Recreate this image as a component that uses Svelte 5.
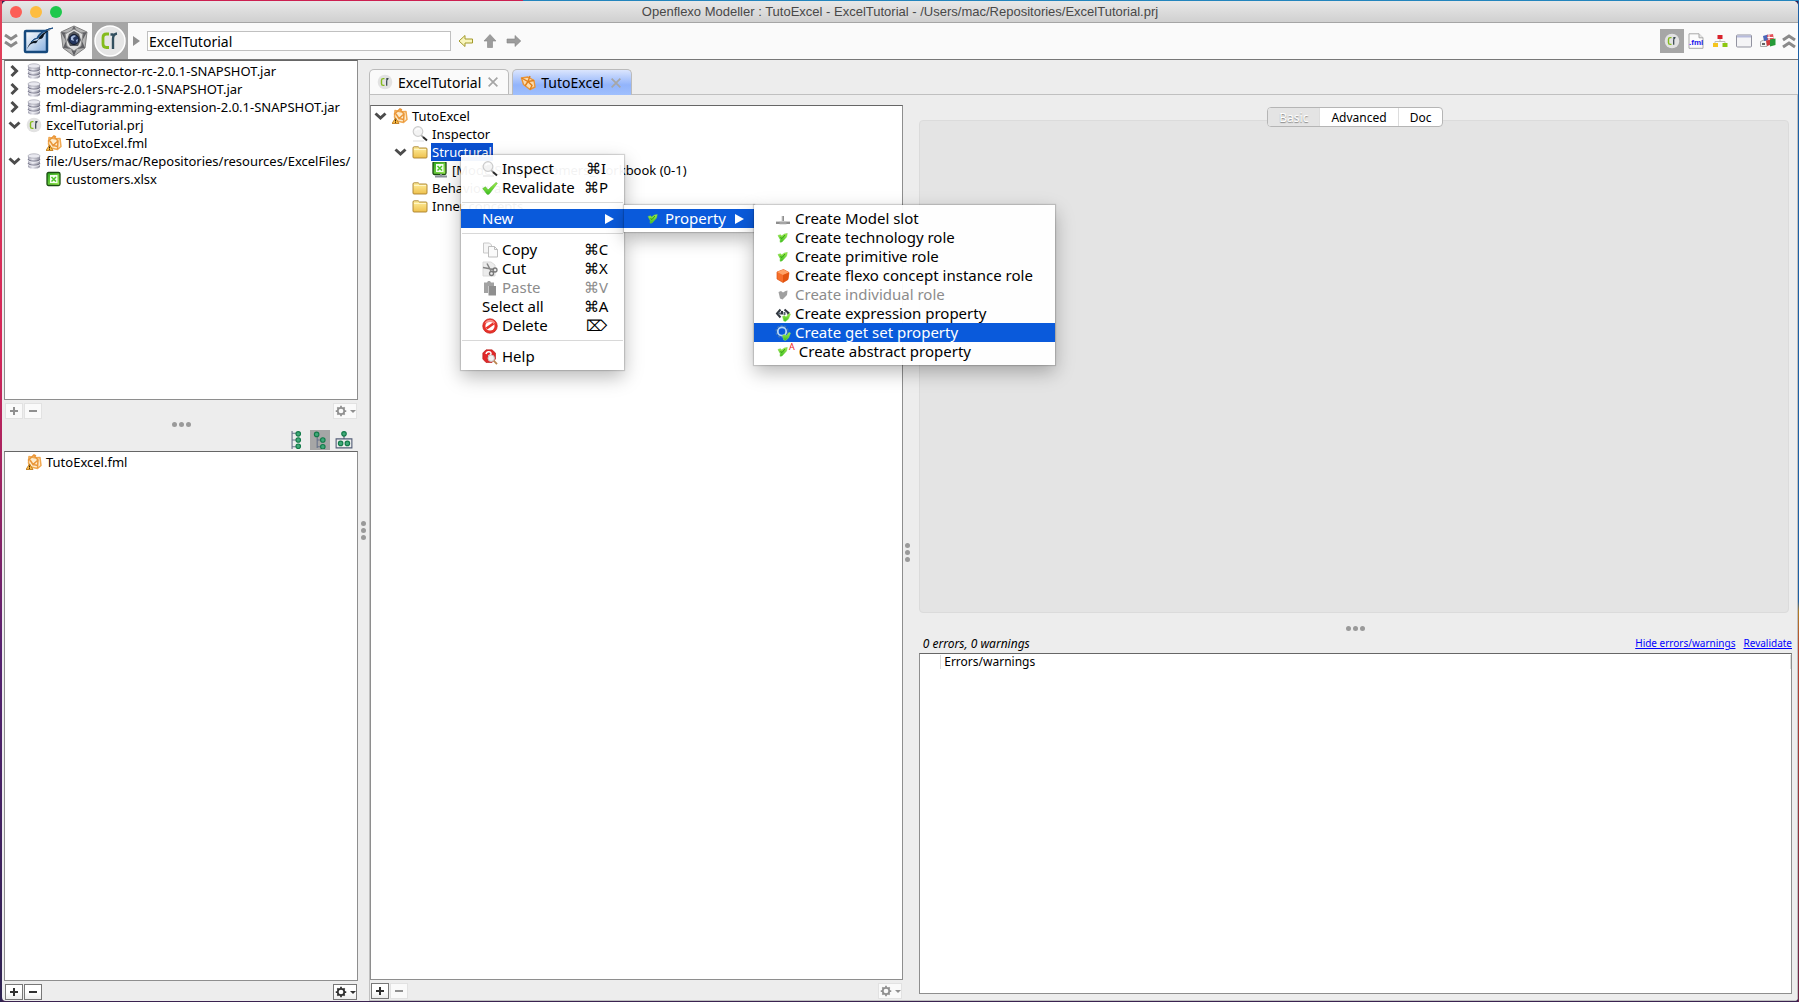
<script lang="ts">
	type Row = { label: string; icon: string; depth: number; open?: boolean; selected?: boolean };
	type Item = {
		label?: string;
		icon?: string;
		key?: string;
		disabled?: boolean;
		active?: boolean;
		arrow?: boolean;
		separator?: boolean;
	};

	const resources: Row[] = [
		{ label: 'http-connector-rc-2.0.1-SNAPSHOT.jar', icon: 'db', depth: 0, open: false },
		{ label: 'modelers-rc-2.0.1-SNAPSHOT.jar', icon: 'db', depth: 0, open: false },
		{ label: 'fml-diagramming-extension-2.0.1-SNAPSHOT.jar', icon: 'db', depth: 0, open: false },
		{ label: 'ExcelTutorial.prj', icon: 'project', depth: 0, open: true },
		{ label: 'TutoExcel.fml', icon: 'fml', depth: 1 },
		{ label: 'file:/Users/mac/Repositories/resources/ExcelFiles/', icon: 'db', depth: 0, open: true },
		{ label: 'customers.xlsx', icon: 'excel', depth: 1 }
	];

	const models: Row[] = [{ label: 'TutoExcel.fml', icon: 'fml', depth: 0 }];

	const concept: Row[] = [
		{ label: 'TutoExcel', icon: 'fml', depth: 0, open: true },
		{ label: 'Inspector', icon: 'inspect', depth: 1 },
		{ label: 'Structural', icon: 'folder', depth: 1, open: true, selected: true },
		{ label: '[ModelSlot] customers_workbook (0-1)', icon: 'excelslot', depth: 2 },
		{ label: 'Behavioural', icon: 'folder', depth: 1 },
		{ label: 'Inner concepts', icon: 'folder', depth: 1 }
	];

	const contextMenu: Item[] = [
		{ label: 'Inspect', icon: 'inspect', key: '⌘I' },
		{ label: 'Revalidate', icon: 'check', key: '⌘P' },
		{ separator: true },
		{ label: 'New', active: true, arrow: true },
		{ separator: true },
		{ label: 'Copy', icon: 'copy', key: '⌘C' },
		{ label: 'Cut', icon: 'cut', key: '⌘X' },
		{ label: 'Paste', icon: 'paste', key: '⌘V', disabled: true },
		{ label: 'Select all', key: '⌘A' },
		{ label: 'Delete', icon: 'delete', key: '⌦' },
		{ separator: true },
		{ label: 'Help', icon: 'help' }
	];

	const newMenu: Item[] = [{ label: 'Property', icon: 'role', active: true, arrow: true }];

	const propertyMenu: Item[] = [
		{ label: 'Create Model slot', icon: 'slot' },
		{ label: 'Create technology role', icon: 'role' },
		{ label: 'Create primitive role', icon: 'role' },
		{ label: 'Create flexo concept instance role', icon: 'cube' },
		{ label: 'Create individual role', icon: 'heart', disabled: true },
		{ label: 'Create expression property', icon: 'expression' },
		{ label: 'Create get set property', icon: 'getset', active: true },
		{ label: 'Create abstract property', icon: 'abstract' }
	];

	const perspectives = [
		{ name: 'Project', icon: 'project' },
		{ name: 'FML', icon: 'fmlfile' },
		{ name: 'Diagram', icon: 'orgchart' },
		{ name: 'Window', icon: 'window' },
		{ name: 'Language', icon: 'flags' }
	];

	const sections = ['Basic', 'Advanced', 'Doc'];

	let section = $state('Basic');
	let perspective = $state('Project');
	let layout = $state('tree');
	let location = $state('ExcelTutorial');

	const smallCheck =
		'<path d="M3 5.500l2.500-.8 1 1.300L9.500 4l2.800-.5L11.500 7 7 12 5 12.200 5.200 9.500z" fill="url(#green)" stroke="#6ccc3c" stroke-width=".5"/><path d="M5.500 7.500l1.500 1 3-3.500" fill="none" stroke="#2f9a1c" stroke-width="1"/>';
	const badgeCheck =
		'<path d="M7.500 10.500l2-1 1.500 1.500 3-3.500 1.500.5-2 5-3 2.500-1.800-.5z" fill="url(#green)" stroke="#8fe05c" stroke-width=".5"/>';
	const excel =
		'<rect x="1" y="1.500" width="13" height="13" rx="1.500" fill="url(#lime)" stroke="#1b4d12" stroke-width="1.300"/><rect x="4" y="4" width="7.500" height="8" fill="#f4fdf0"/><path d="M5.500 6l4.500 4.500M10 6l-4.500 4.500" stroke="#4cc428" stroke-width="1.500"/>';
	const gear =
		'<circle cx="8" cy="8" r="3.700" fill="none" stroke="currentColor" stroke-width="2"/><path d="M8 2v2M8 12v2M2 8h2M12 8h2M3.800 3.800l1.400 1.400M10.800 10.800l1.400 1.400M3.800 12.200l1.400-1.400M10.800 5.200l1.400-1.400" stroke="currentColor" stroke-width="2"/>';

	const icons: Record<string, string> = {
		db: '<path d="M2 3v10.500c0 3 12 3 12 0V3z" fill="url(#metal)"/><path d="M2 6c0 2.800 12 2.800 12 0M2 10c0 2.800 12 2.800 12 0" fill="none" stroke="#77778a" stroke-width="1"/><path d="M2 7.200c0 2.800 12 2.800 12 0M2 11.200c0 2.800 12 2.800 12 0" fill="none" stroke="#f0f0f6" stroke-width=".9"/><ellipse cx="8" cy="3" rx="6" ry="2.200" fill="#e9e9f0" stroke="#a4a4b0" stroke-width=".7"/>',
		project:
			'<circle cx="8" cy="8" r="7.300" fill="#e2e2e2"/><path d="M7.500 4.600H6.300Q4.500 4.600 4.500 6.300v3.400q0 1.700 1.700 1.700h1.300" fill="none" stroke="#84bb1c" stroke-width="1.400"/><path d="M9.700 11.800V7M9.300 5.300q.3-1 2.200-.7M9.700 7q0-1.600 1.300-2" fill="none" stroke="#33434c" stroke-width="1.200"/>',
		fml: '<path d="M3 2.500l5.500 1.200L14 3.500l1 8-3.500 3L5 13 2.500 9z" fill="#fdeccd" stroke="#f0a850" stroke-width="1.500" stroke-linejoin="round"/><path d="M2 6.500L8 1l2 1M8 1.500l4 4.500-5 4.500L4 6M12 6l-.5 8M7 10.500l5 1" fill="none" stroke="#ea9638" stroke-width="1.500"/><path d="M3.500 10l3.500 5.500H0z" fill="#fbbd45" stroke="#b8700f" stroke-width=".8" stroke-linejoin="round"/><path d="M3.500 11.500v2M3.500 14.200v.8" stroke="#3a2000" stroke-width="1"/>',
		concept:
			'<path d="M1.500 3L8 2l6 3.500 1 6.500-5 2.500L3.500 9.500z" fill="#fbdcae" stroke="#ea9435" stroke-width="1.400" stroke-linejoin="round"/><path d="M1.500 3L8 6.500l6-1M8 6.500L5 11M8 6.500l4 4-2 4M10 1L8 6.500" fill="none" stroke="#e0801c" stroke-width="1.400"/>',
		excel,
		excelslot: `<g transform="translate(0 -2)">${excel}</g><path d="M3 14.500h12M9 12v2" stroke="#8a9098" stroke-width="2"/>`,
		inspect:
			'<circle cx="6" cy="5.500" r="4.800" fill="#f3f3f3" stroke="#cdcdcd" stroke-width="1.200"/><path d="M3.500 4.500q1.500-2.500 4.500-1.500" fill="none" stroke="#fff" stroke-width="1.500"/><path d="M9.500 9.500L11 11" stroke="#888" stroke-width="1.500"/><path d="M11 11l4 3.500" stroke="#2a2a2a" stroke-width="2"/><path d="M1 15h11" stroke="#ddd"/>',
		folder:
			'<path d="M1 4q0-1.200 1.200-1.200h4L7.500 4H14q1 0 1 1v8q0 1-1 1H2q-1 0-1-1z" fill="url(#gold)" stroke="#a8802a" stroke-width=".9"/><path d="M2 5.500h12" stroke="#fff6c6"/>',
		check: '<path d="M.8 8.500L3.500 6.800 6 10l8-7.500 1.300.8L7 14.300H5z" fill="url(#green)" stroke="#4fb52c" stroke-width=".6"/>',
		role: smallCheck,
		abstract: smallCheck,
		slot: '<path d="M1 12h14M8 5v6" stroke="#8e8e8e" stroke-width="2"/><path d="M1 10.500h14M7 5v5" stroke="#d0d0d0" stroke-width="1"/><path d="M4.500 10.800h7v2.500h-7z" fill="#a5a5a5"/>',
		cube: '<path d="M2 4l6.500-2.500L14 4.500l-1 7-5 3-6-3.500z" fill="#f66f2a" stroke="#dc5211" stroke-width=".7"/><path d="M2 4l6.500-2.500L14 4.500 8 7z" fill="#ffa266"/><path d="M8 7l6-2.500-1 7-5 3z" fill="#e2540f"/>',
		heart: '<path d="M3.500 5L6 4l2 1.500L10.500 4l2-.5-.5 4.500-4.500 4.500-2.500-1z" fill="#a0a0a0"/>',
		expression: `<path d="M5.500 3.500L2 7.500l3.500 4M9.500 3.500l4 3.500-1 1.500M7 5v3.500" fill="none" stroke="#30363e" stroke-width="2"/><path d="M3 7.500h3M9.500 6v3" stroke="#596470" stroke-width="2"/>${badgeCheck}`,
		getset: `<circle cx="7" cy="6.500" r="5.800" fill="none" stroke="#3d74b8" stroke-width="1.600" stroke-dasharray="2.200 1.400"/><circle cx="7" cy="6.500" r="4.200" fill="none" stroke="#b4d6f7" stroke-width="1.800"/>${badgeCheck}`,
		copy: '<path d="M1.500 1h6l2 2v8h-8z" fill="#f5f5f5" stroke="#c9c9c9"/><path d="M6.500 4.500h6l3 3v7.500h-9z" fill="#fafafa" stroke="#bdbdbd"/><path d="M12.500 4.500v3h3" fill="none" stroke="#bdbdbd"/>',
		cut: '<path d="M1 1h8l4 3v11H1z" fill="#ececec" stroke="#dadada"/><path d="M5 2.500l4 7.500M1 6.500L12 8.500" stroke="#858585" stroke-width="1.500"/><circle cx="13" cy="9" r="2" fill="none" stroke="#777" stroke-width="1.300"/><circle cx="9.500" cy="12.500" r="2" fill="none" stroke="#777" stroke-width="1.300"/>',
		paste: '<path d="M2 2.500h3l1-1.500h2l1 1.500h3V6H6v7H2z" fill="#a2a2a2"/><path d="M6.500 6H14v9.500H6.500z" fill="#8f8f8f"/>',
		delete:
			'<circle cx="8" cy="8" r="7.300" fill="#e8322a" stroke="#bd1d18" stroke-width=".6"/><circle cx="8" cy="8" r="4.600" fill="#fff"/><path d="M4.500 10.500L11.500 5.500" stroke="#e8322a" stroke-width="2.600"/><path d="M2.500 5.500Q4 1.800 8 1.700t5.500 3.800Q8 2.500 2.500 5.500" fill="#f7928b"/>',
		help: '<path d="M4 .8h6L13.500 4v6L10 13.500H4L.8 10V4z" fill="#e0282a" stroke="#b31613" stroke-width=".6"/><path d="M4 5Q4.500 2.600 6.800 2.700t2.200 2Q9 6 6.500 7" fill="none" stroke="#fff" stroke-width="1.500"/><circle cx="9.200" cy="9.200" r="3.200" fill="#f1f1f1" stroke="#c4c4c4"/><path d="M11.700 11.700l3.300 3.500" stroke="#b98550" stroke-width="1.800"/>',
		fmlfile:
			'<path d="M1 .8h10l4 4v10.500H1z" fill="#fcfcfc" stroke="#a9a9a9"/><path d="M11 .8v4h4" fill="#e5e5e5" stroke="#a9a9a9"/><text x="1" y="12" font-size="8" font-weight="700" fill="#1d16ec" font-family="Liberation Sans, sans-serif">.fml</text>',
		orgchart:
			'<path d="M8 5v3M3 11V8.500h10V11" fill="none" stroke="#bbb"/><rect x="5.500" y="2" width="5" height="4" fill="#d9232c"/><rect x="1" y="10" width="5" height="4" fill="#f4c51e"/><rect x="10.500" y="10" width="5" height="4" fill="#8cc711"/>',
		window:
			'<rect x=".5" y="2" width="15" height="12" rx="1" fill="#f4f4f6" stroke="#9293a0"/><path d="M1 3.500h14" stroke="#b7bbdc" stroke-width="2"/>',
		flags: '<path d="M.5 8.500L4 7l3 1v5.500H.5z" fill="#f4f4f4" stroke="#aaa"/><path d="M3 3l5-1.500v6L4 8z" fill="#4a66b8"/><path d="M7 2l6-1 1 6-6 1z" fill="#e4525a"/><path d="M9 2v5M7.500 4.500h6" stroke="#fff"/><path d="M10 6.500l5.500-1V12L10 13.500z" fill="#259a37"/><path d="M6 7.500l4-.5v5l-3 1z" fill="#d0393b"/><path d="M2 11h3" stroke="#333" stroke-width="1.500"/>',
		gear,
		plus: '<path d="M8 4v8M4 8h8" stroke="currentColor" stroke-width="2"/>',
		minus: '<path d="M4 8h8" stroke="currentColor" stroke-width="2"/>',
		closed: '<path d="M4.500 3l5 5-5 5" fill="none" stroke="#4c4c4c" stroke-width="3"/>',
		open: '<path d="M2.500 5.500l5 4.500 5-4.500" fill="none" stroke="#4c4c4c" stroke-width="3"/>',
		close: '<path d="M3 3l10 10M13 3L3 13" fill="none" stroke="#a6a6a6" stroke-width="2"/>',
		back: '<path d="M1 8l6-5.500V6h7.500v4H7v3.500z" fill="#f8f5bd" stroke="#a39a2b"/>',
		up: '<path d="M8 1.500L14 8h-3.500v6.500h-5V8H2z" fill="#9c9c9c" stroke="#858585" stroke-width=".6"/>',
		forward: '<path d="M14.800 8L9 2.500V6H1v4h8v3.500z" fill="#9c9c9c" stroke="#858585" stroke-width=".6"/>',
		list: '<path d="M4.500 0v16M4.500 2h4M4.500 8h4M4.500 14h4" stroke="#68738a"/><g fill="#3fa978" stroke="#137a49"><circle cx="10" cy="2.500" r="2"/><circle cx="10" cy="8" r="2"/><circle cx="10" cy="13.500" r="2"/></g>',
		tree: '<path d="M5.500 3v12M5.500 8h5M5.500 14h5" stroke="#68738a"/><g fill="#3fa978" stroke="#137a49"><circle cx="5" cy="3" r="2"/><circle cx="10.500" cy="8" r="2"/><circle cx="10.500" cy="14" r="2"/></g>',
		group: '<path d="M8 4v3M1 7h14v8H1z" fill="none" stroke="#555f78"/><g fill="#3fa978" stroke="#137a49"><circle cx="8" cy="2.500" r="2"/><circle cx="5" cy="11" r="2"/><circle cx="11" cy="11" r="2"/></g>'
	};
</script>

{#snippet icon(name: string, size = 16)}
	<svg class="icon" width={size} height={size} viewBox="0 0 16 16" aria-hidden="true">{@html icons[name]}</svg>
{/snippet}

{#snippet tree(rows: Row[], label: string)}
	<ul class="tree" aria-label={label}>
		{#each rows as row}
			<li style:padding-left="{row.depth * 20}px">
				{#if row.open !== undefined}
					<button class="toggle" aria-label="Toggle {row.label}" onclick={() => (row.open = !row.open)}>
						{@render icon(row.open ? 'open' : 'closed')}
					</button>
				{:else}
					<span class="toggle"></span>
				{/if}
				{@render icon(row.icon)}
				<span class="row-label" class:selected={row.selected}>{row.label}</span>
			</li>
		{/each}
	</ul>
{/snippet}

{#snippet footer(enabled: string[])}
	<div class="footer">
		<button class:off={!enabled.includes('add')} aria-label="Add">{@render icon('plus')}</button>
		<button class:off={!enabled.includes('remove')} aria-label="Remove">{@render icon('minus')}</button>
		<button class="options" class:off={!enabled.includes('options')} aria-label="Options">
			{@render icon('gear', 14)}<i class="caret"></i>
		</button>
	</div>
{/snippet}

{#snippet menu(items: Item[], name: string)}
	<div class="menu {name}" role="menu">
		{#each items as item}
			{#if item.separator}
				<hr />
			{:else}
				<button role="menuitem" class:active={item.active} disabled={item.disabled}>
					{#if item.icon}{@render icon(item.icon)}{/if}
					{#if item.icon === 'abstract'}<sup>A</sup>{/if}
					<span>{item.label}</span>
					{#if item.key}<kbd>{item.key}</kbd>{/if}
					{#if item.arrow}<i class="arrow"></i>{/if}
				</button>
			{/if}
		{/each}
	</div>
{/snippet}

<svg class="defs" width="0" height="0" aria-hidden="true">
	<defs>
		<linearGradient id="green" x2="0" y2="1">
			<stop offset="0" stop-color="#a4f048" />
			<stop offset="1" stop-color="#3cbd24" />
		</linearGradient>
		<linearGradient id="lime" x2="1" y2="1">
			<stop offset="0" stop-color="#27a31c" />
			<stop offset="1" stop-color="#a6f25a" />
		</linearGradient>
		<linearGradient id="gold" x2="0" y2="1">
			<stop offset="0" stop-color="#fff0a0" />
			<stop offset="1" stop-color="#eec04c" />
		</linearGradient>
		<linearGradient id="metal">
			<stop offset="0" stop-color="#a3a3b2" />
			<stop offset=".4" stop-color="#e8e8ef" />
			<stop offset="1" stop-color="#8a8a99" />
		</linearGradient>
		<linearGradient id="blue" x2="1" y2="1">
			<stop offset="0" stop-color="#fff" />
			<stop offset="1" stop-color="#86aede" />
		</linearGradient>
	</defs>
</svg>

<div class="desktop">
	<div class="window">
		<header class="titlebar">
			<div class="lights">
				<button class="red" aria-label="Close window"></button>
				<button class="yellow" aria-label="Minimize window"></button>
				<button class="green" aria-label="Zoom window"></button>
			</div>
			<h1>Openflexo Modeller : TutoExcel - ExcelTutorial - /Users/mac/Repositories/ExcelTutorial.prj</h1>
		</header>

		<div class="toolbar">
			<button class="expand" aria-label="Collapse left">
				<svg width="14" height="16" viewBox="0 0 14 16" fill="none" stroke="#8a8a8a" stroke-width="3">
					<path d="M1 2l6 4 6-4M1 9l6 4 6-4" />
				</svg>
			</button>
			<button class="module" aria-label="Office">
				<svg width="32" height="30" viewBox="0 0 32 30">
					<rect x="3" y="5" width="22" height="21" rx="1" fill="url(#blue)" stroke="#174a7d" stroke-width="2.500" />
					<path d="M5 23q3-8 7-8 3 0 4-1 2-7 14-11-6 3-8 6-1 4-4 4-2 0-3 3-1 2-3 1-4 0-7 6z" fill="#0b1622" />
					<path d="M15 12q2-7 16-10-9 1-15 10zM9 16q3-4 7-4" fill="#1c4e84" stroke="#1c4e84" stroke-width="1" />
				</svg>
			</button>
			<button class="module" aria-label="Modelling">
				<svg width="32" height="32" viewBox="0 0 32 32">
					<path d="M16 1l13 6-2 16-11 8L5 23 3 7z" fill="#b5b5b5" stroke="#808080" />
					<path d="M16 1l4 7 9-1-5 9 3 7-8 1-3 7-3-7-8-1 3-7-5-9 9 1z" fill="#606064" />
					<path d="M16 4l9 5-2 12-7 5-7-5L7 9z" fill="#dcdcdc" stroke="#8b8b8b" />
					<path d="M16 6l5 3 2 6-3 6h-8l-3-6 2-6z" fill="#55585e" />
					<circle cx="16" cy="14.500" r="5" fill="#24365f" stroke="#111a2b" />
					<path d="M13 12q3-3 5-1l-3 2 1 3-3-1zM18 15l2-1-1 4z" fill="#a7bbdd" />
				</svg>
			</button>
			<button class="module current" aria-label="Openflexo">
				<svg width="34" height="34" viewBox="0 0 34 34">
					<circle cx="17" cy="17" r="15" fill="#e6e6e6" stroke="#fff" stroke-width="1.500" />
					<path d="M16 10h-2.500Q10 10 10 13.500v6.500q0 3.500 3.500 3.500H16" fill="none" stroke="#84bb1c" stroke-width="2.800" />
					<path d="M20 25V15M17.500 10.500h3M20 15q0-5 4-5.500" fill="none" stroke="#33505f" stroke-width="2.400" />
				</svg>
			</button>
			<i class="arrow location-arrow"></i>
			<input type="text" aria-label="Location" bind:value={location} />
			<div class="nav">
				<button aria-label="Back">{@render icon('back')}</button>
				<button aria-label="Up">{@render icon('up')}</button>
				<button aria-label="Forward">{@render icon('forward')}</button>
			</div>
			<div class="perspectives">
				{#each perspectives as p}
					<button class:current={p.name === perspective} aria-label={p.name} onclick={() => (perspective = p.name)}>
						{@render icon(p.icon)}
					</button>
				{/each}
			</div>
			<button class="expand" aria-label="Collapse right">
				<svg width="14" height="16" viewBox="0 0 14 16" fill="none" stroke="#8a8a8a" stroke-width="3">
					<path d="M1 7l6-4 6 4M1 14l6-4 6 4" />
				</svg>
			</button>
		</div>

		<main>
			<aside>
				<section class="resources">
					<div class="panel">{@render tree(resources, 'Resources')}</div>
					{@render footer([])}
				</section>
				<div class="grip"><i></i><i></i><i></i></div>
				<div class="layouts">
					{#each ['list', 'tree', 'group'] as name}
						<button class:current={name === layout} aria-label={name} onclick={() => (layout = name)}>
							{@render icon(name, 18)}
						</button>
					{/each}
				</div>
				<div class="panel grow">{@render tree(models, 'Models')}</div>
				{@render footer(['add', 'remove', 'options'])}
			</aside>

			<div class="grip vertical"><i></i><i></i><i></i></div>

			<div class="workspace">
				<div class="tabs">
					<div class="tab">
						{@render icon('project')}<span>ExcelTutorial</span>
						<button aria-label="Close ExcelTutorial">{@render icon('close', 14)}</button>
					</div>
					<div class="tab front">
						{@render icon('concept')}<span>TutoExcel</span>
						<button aria-label="Close TutoExcel">{@render icon('close', 14)}</button>
					</div>
				</div>
				<div class="editor">
					<section class="browser">
						<div class="panel grow">{@render tree(concept, 'Virtual model')}</div>
						{@render footer(['add'])}
					</section>
					<div class="grip vertical"><i></i><i></i><i></i></div>
					<section class="details">
						<div class="segments">
							{#each sections as s}
								<button class:current={s === section} onclick={() => (section = s)}>{s}</button>
							{/each}
						</div>
						<div class="box"></div>
						<div class="grip"><i></i><i></i><i></i></div>
						<div class="status">
							<em>0 errors, 0 warnings</em>
							<a href="#hide">Hide errors/warnings</a>
							<a href="#revalidate">Revalidate</a>
						</div>
						<div class="panel issues">
							<table>
								<thead>
									<tr><th class="kind"></th><th>Errors/warnings</th></tr>
								</thead>
							</table>
						</div>
					</section>
				</div>
			</div>
		</main>
	</div>

	{@render menu(contextMenu, 'context')}
	{@render menu(newMenu, 'new')}
	{@render menu(propertyMenu, 'property')}
</div>

<style>
	:global(body) {
		overflow: hidden;
	}

	.defs {
		position: absolute;
	}

	.desktop {
		box-sizing: border-box;
		position: relative;
		height: 100vh;
		padding: 1px 1px 1px 2px;
		background:
			linear-gradient(90deg, #cc1f50 0 523px, #2385bd 523px) top / 100% 1px no-repeat,
			linear-gradient(#e2435a, #d42558 35%, #55216f 65%, #2d2250) left / 2px 100% no-repeat,
			linear-gradient(#1d60a5 60%, #b07c26 61%, #b94330 65%, #6b2348) right / 1px 100% no-repeat,
			#3a2250;
		font-family: 'Noto Sans', 'Open Sans', sans-serif;
		font-size: 13px;
		color: #000;
	}

	.desktop * {
		box-sizing: border-box;
	}

	button {
		display: flex;
		align-items: center;
		justify-content: center;
		padding: 0;
		border: none;
		background: none;
		color: inherit;
		font: inherit;
	}

	.icon {
		flex-shrink: 0;
		display: block;
	}

	.window {
		display: flex;
		flex-direction: column;
		height: 100%;
		border-radius: 5px 5px 4px 4px;
		overflow: hidden;
		background: #ededed;
	}

	.titlebar {
		position: relative;
		display: flex;
		align-items: center;
		justify-content: center;
		height: 22px;
		flex-shrink: 0;
		background: linear-gradient(#e8e8e8, #d0d0d0);
		border-bottom: 1px solid #a5a5a5;
	}

	h1 {
		margin: 0;
		font-family: 'Liberation Sans', sans-serif;
		font-size: 13px;
		font-weight: 400;
		color: #484848;
	}

	.lights {
		position: absolute;
		left: 8px;
		display: flex;
		gap: 8px;
	}

	.lights button {
		width: 12px;
		height: 12px;
		border-radius: 50%;
	}

	.red {
		background: #fc5f57;
	}

	.yellow {
		background: #fdbd40;
	}

	.green {
		background: #1ec84c;
	}

	.toolbar {
		display: flex;
		align-items: center;
		flex-shrink: 0;
		height: 37px;
		background: #fafafa;
		border-bottom: 1px solid #777;
	}

	.expand {
		width: 18px;
		flex-shrink: 0;
	}

	.module {
		width: 36px;
		height: 36px;
		flex-shrink: 0;
	}

	.current {
		background: #a6a6a6;
	}

	.arrow {
		border-left: 9px solid currentColor;
		border-top: 5px solid transparent;
		border-bottom: 5px solid transparent;
	}

	.location-arrow {
		margin: 0 7px 0 5px;
		border-left-width: 7px;
		color: #8e8e8e;
	}

	input {
		width: 304px;
		height: 20px;
		padding: 0 1px;
		border: 1px solid #c0c0c0;
		background: #fff;
		font: inherit;
		font-size: 14px;
	}

	.nav {
		display: flex;
		gap: 8px;
		margin-left: 7px;
	}

	.perspectives {
		display: flex;
		margin-left: auto;
	}

	.perspectives button {
		width: 24px;
		height: 24px;
	}

	main {
		display: flex;
		flex: 1;
		min-height: 0;
	}

	aside {
		display: flex;
		flex-direction: column;
		width: 356px;
		padding-left: 2px;
	}

	.resources {
		display: flex;
		flex-direction: column;
		height: 360px;
	}

	.resources .panel {
		flex: 1;
	}

	.panel {
		padding-top: 1px;
		background: #fff;
		border: 1px solid #8e8e8e;
		border-top-color: #666;
		overflow: hidden;
	}

	.grow {
		flex: 1;
	}

	.tree {
		margin: 0;
		padding: 0 0 0 1px;
		list-style: none;
	}

	.tree li {
		display: flex;
		align-items: center;
		height: 18px;
		white-space: nowrap;
	}

	.toggle {
		width: 18px;
		flex-shrink: 0;
	}

	.tree .toggle {
		margin-right: 2px;
	}

	.row-label {
		padding: 0 1px;
		margin-left: 3px;
		line-height: 18px;
	}

	.selected {
		background: #0a50d0;
		color: #fff;
	}

	.footer {
		display: flex;
		flex-shrink: 0;
		gap: 1px;
		padding: 3px 1px 1px;
	}

	.footer button {
		width: 18px;
		height: 16px;
		background: linear-gradient(#fff 50%, #ececec);
		border: 1px solid #777;
		color: #303030;
	}

	.footer .options {
		width: 24px;
		margin-left: auto;
		gap: 2px;
	}

	.footer .off {
		background: #fafafa;
		border-color: #e2e2e2;
		color: #909090;
	}

	.caret {
		border-top: 3px solid currentColor;
		border-left: 3px solid transparent;
		border-right: 3px solid transparent;
	}

	.grip {
		display: flex;
		align-items: center;
		justify-content: center;
		gap: 2px;
		height: 8px;
		flex-shrink: 0;
	}

	.grip.vertical {
		flex-direction: column;
		width: 11px;
		height: auto;
	}

	.editor .grip.vertical {
		width: 10px;
	}

	.grip i {
		width: 5px;
		height: 5px;
		border-radius: 50%;
		background: #9a9a9a;
	}

	.layouts {
		display: flex;
		align-items: center;
		justify-content: flex-end;
		gap: 4px;
		height: 23px;
		padding-right: 4px;
	}

	.layouts button {
		width: 20px;
		height: 20px;
	}

	.workspace {
		display: flex;
		flex-direction: column;
		flex: 1;
		min-width: 0;
	}

	.tabs {
		display: flex;
		align-items: flex-end;
		gap: 3px;
		height: 34px;
		flex-shrink: 0;
	}

	.tab {
		display: flex;
		align-items: center;
		gap: 5px;
		height: 25px;
		padding: 0 8px 0 7px;
		background: #fafafa;
		border: 1px solid #bbb;
		border-bottom: none;
		border-radius: 5px 5px 0 0;
		font-size: 14px;
	}

	.tab.front {
		height: 26px;
		margin-bottom: -1px;
		background: linear-gradient(#dbe5fd, #92b4fb 60%, #9fbffd);
		position: relative;
	}

	.editor {
		display: flex;
		flex: 1;
		min-height: 0;
		padding-top: 10px;
		border: 1px solid #c0c0c0;
	}

	.browser {
		display: flex;
		flex-direction: column;
		flex: 535;
		min-width: 0;
	}

	.details {
		display: flex;
		flex-direction: column;
		flex: 877;
		min-width: 0;
		padding: 2px 5px 6px 6px;
	}

	.segments {
		display: flex;
		align-self: center;
		z-index: 1;
		height: 20px;
		margin-bottom: -7px;
		background: #fff;
		border: 1px solid #b5b5b5;
		border-radius: 4px;
		overflow: hidden;
		font-size: 12px;
	}

	.segments button {
		padding: 0 11px;
		border-left: 1px solid #ddd;
	}

	.segments button:first-child {
		border-left: none;
	}

	.segments .current {
		background: #e4e4e4;
		color: #fff;
		text-shadow: 0 1px 1px #888;
	}

	.box {
		flex: 493;
		margin-right: 3px;
		background: #e4e4e4;
		border: 1px solid #dbdbdb;
		border-radius: 4px;
	}

	.details > .grip {
		margin: 11px 0 1px;
	}

	.status {
		display: flex;
		align-items: center;
		gap: 8px;
		height: 20px;
		padding: 0 0 0 4px;
		font-size: 10px;
	}

	.status em {
		margin-right: auto;
		font-size: 12px;
	}

	a {
		color: #00f;
	}

	.issues {
		flex: 339;
	}

	table {
		width: 100%;
		border-collapse: collapse;
		font-size: 12px;
	}

	th {
		height: 14px;
		padding: 0 3px;
		border-right: 1px solid #ddd;
		font-weight: 400;
		line-height: 14px;
		text-align: left;
	}

	.kind {
		width: 21px;
	}

	.menu {
		position: absolute;
		padding: 4px 0;
		background: rgba(255, 255, 255, 0.95);
		box-shadow:
			0 0 1px 1px rgba(0, 0, 0, 0.15),
			0 7px 18px rgba(0, 0, 0, 0.28);
		font-size: 15px;
	}

	.context {
		left: 461px;
		top: 155px;
		width: 163px;
	}

	.new {
		left: 624px;
		top: 205px;
		width: 130px;
	}

	.property {
		left: 754px;
		top: 205px;
		width: 301px;
	}

	.menu button {
		justify-content: flex-start;
		gap: 4px;
		width: 100%;
		height: 19px;
		padding: 0 10px 0 21px;
		line-height: 19px;
		white-space: nowrap;
	}

	.menu .active {
		background: #0a5adb;
		color: #fff;
	}

	.menu button:disabled {
		color: #8c8c8c;
	}

	.menu .arrow,
	.menu kbd {
		margin-left: auto;
	}

	.menu kbd {
		width: 30px;
		margin-right: 3px;
		font: inherit;
	}

	.menu sup {
		align-self: flex-start;
		margin: 0 0 0 -6px;
		font-size: 9px;
		line-height: 10px;
		color: #e22;
	}

	hr {
		height: 1px;
		margin: 5px 1px 6px;
		border: none;
		background: #d8d8d8;
	}
</style>
